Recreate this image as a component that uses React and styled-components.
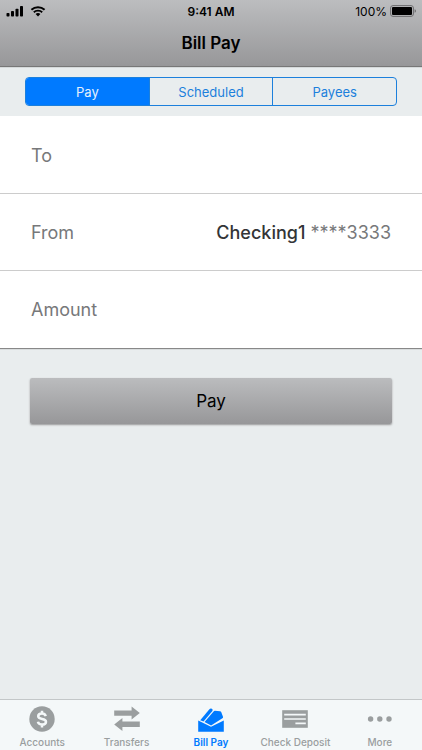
import { useState } from "react";
import styled, { createGlobalStyle } from "styled-components";


const SignalIcon = () => (
    <svg width="18" height="12" viewBox="0 0 18 12" aria-hidden="true">
        <rect x="0.5" y="8" width="3" height="3.5" rx="0.8" />
        <rect x="5" y="6" width="3" height="5.5" rx="0.8" />
        <rect x="9.5" y="3.7" width="3" height="7.8" rx="0.8" />
        <rect x="14" y="1" width="3" height="10.5" rx="0.8" />
    </svg>
)

const WifiIcon = () => (
    <svg width="16" height="12" viewBox="0 0 16 12" aria-hidden="true">
        <path d="M1.4 4.7C5.1 1.3 10.9 1.3 14.6 4.7" fill="none" stroke="#000" strokeWidth="2" />
        <path d="M3.8 7.2C6.1 5.1 9.9 5.1 12.2 7.2" fill="none" stroke="#000" strokeWidth="1.9" />
        <path d="M5.6 9C7 7.8 9 7.8 10.4 9L8 11.4Z" />
    </svg>
)

const BatteryIcon = () => (
    <svg width="26" height="12" viewBox="0 0 26 12" aria-hidden="true">
        <rect x="0.6" y="0.6" width="22.8" height="10.8" rx="2.4" fill="none" stroke="#6c6c6e" strokeWidth="1" />
        <rect x="2" y="2" width="20" height="8" rx="1" />
        <path d="M24.6 4.2C26.4 4.6 26.4 7.4 24.6 7.8Z" fill="#6c6c6e" />
    </svg>
)

const AccountsIcon = () => (
    <svg width="28" height="28" viewBox="0 0 28 28" aria-hidden="true">
        <circle cx="14" cy="14" r="12.7" fill="currentColor" />
        <path
            d="M17.8 11.1C17.2 9.3 15.9 8.5 14 8.5C11.8 8.5 10.2 9.6 10.2 11.3C10.2 15.1 18 12.8 18 16.7C18 18.5 16.4 19.6 14.1 19.6C11.9 19.6 10.4 18.7 9.9 16.8M14 5.8V8.5M14 19.6V22.4"
            fill="none"
            stroke="#f4f8f9"
            strokeWidth="2.5"
        />
    </svg>
)

const TransfersIcon = () => (
    <svg width="28" height="28" viewBox="0 0 28 28" fill="currentColor" aria-hidden="true">
        <path d="M1.2 5.5H18.6V1.6L26.8 8.1L18.6 14.6V10.8H1.2Z" />
        <path d="M26.8 16.6H9.4V12.9L1.2 19.4L9.4 25.9V21.9H26.8Z" />
    </svg>
)

const BillPayIcon = () => (
    <svg width="28" height="28" viewBox="0 0 28 28" fill="currentColor" aria-hidden="true">
        <path d="M1.2 15.4L14 21.8L26.8 15.4V26.8H1.2Z" />
        <path d="M3.2 15.2L12.2 4.4Q13.4 3.2 14.9 3.8Q16.2 4.6 15.4 5.9L6.5 16.6Z" />
        <path d="M7.5 16.9L16.6 6.4Q17.1 5.8 17.9 5.8L23 6.2Q23.9 6.3 24.2 7.1L26 11.7Q26.3 12.7 25.4 13.2L14.1 20.4Z" />
    </svg>
)

const CheckIcon = () => (
    <svg width="28" height="28" viewBox="0 0 28 28" aria-hidden="true">
        <rect x="1.2" y="5.2" width="25.6" height="17.6" fill="currentColor" />
        <path d="M3.2 9.7H24.8M3.2 14H24.8M14.4 18.3H24.8" stroke="#f4f8f9" strokeWidth="1.7" />
    </svg>
)

const MoreIcon = () => (
    <svg width="28" height="28" viewBox="0 0 28 28" fill="currentColor" aria-hidden="true">
        <circle cx="4.6" cy="14" r="2.7" />
        <circle cx="13.8" cy="14" r="2.7" />
        <circle cx="23" cy="14" r="2.7" />
    </svg>
)

const sections = ["Pay", "Scheduled", "Payees"];

const tabs = [
    { label: "Accounts", href: "#accounts", Icon: AccountsIcon },
    { label: "Transfers", href: "#transfers", Icon: TransfersIcon },
    { label: "Bill Pay", href: "#bill-pay", Icon: BillPayIcon },
    { label: "Check Deposit", href: "#check-deposit", Icon: CheckIcon },
    { label: "More", href: "#more", Icon: MoreIcon },
];


const App = () => {
    const [section, setSection] = useState("Pay");
    const [amount, setAmount] = useState("");

    return (
        <Page>
            <GlobalStyle />
            <Header>
                <StatusBar>
                    <StatusSide>
                        <SignalIcon />
                        <WifiIcon />
                    </StatusSide>
                    <Clock>9:41 AM</Clock>
                    <StatusSide $end>
                        <span>100%</span>
                        <BatteryIcon />
                    </StatusSide>
                </StatusBar>
                <Title>Bill Pay</Title>
            </Header>
            <Main>
                <Segments>
                    {sections.map((name) => (
                        <Segment
                            key={name}
                            type="button"
                            $active={name === section}
                            aria-pressed={name === section}
                            onClick={() => setSection(name)}
                        >
                            {name}
                        </Segment>
                    ))}
                </Segments>
                <Form onSubmit={(e) => e.preventDefault()}>
                    <Fields>
                        <PickerRow type="button">To</PickerRow>
                        <PickerRow type="button">
                            From
                            <Account><AccountName>Checking1</AccountName> ****3333</Account>
                        </PickerRow>
                        <AmountRow>
                            <label htmlFor="amount">Amount</label>
                            <AmountInput
                                id="amount"
                                inputMode="decimal"
                                value={amount}
                                onChange={(e) => setAmount(e.target.value)}
                            />
                        </AmountRow>
                    </Fields>
                    <PayButton type="submit">Pay</PayButton>
                </Form>
            </Main>
            <TabBar>
                {tabs.map(({ label, href, Icon }) => (
                    <Tab key={label} href={href} $active={label === "Bill Pay"}>
                        <Icon />
                        {label}
                    </Tab>
                ))}
            </TabBar>
        </Page>
    );
}

export default App;


const GlobalStyle = createGlobalStyle`
    * {
        box-sizing:border-box;
    }

    body {
        margin:0;
        background:#e9edee;
        font-family:Inter, "Liberation Sans", sans-serif;
    }

    button, input {
        font-family:inherit;
    }
`

const Page = styled.div`
    min-height:100vh;
    display:flex;
    flex-direction:column;
`

const Header = styled.header`
    padding-bottom:11px;
    background:linear-gradient(#bcbdbf, #979799);
    box-shadow:0 1px 1px #777;
`

const StatusBar = styled.div`
    height:22px;
    padding:0 6px;
    display:grid;
    grid-template-columns:1fr auto 1fr;
    align-items:center;
    font-size:12px;
`

const StatusSide = styled.div`
    display:flex;
    align-items:center;
    justify-content:${(props) => (props.$end ? "flex-end" : "flex-start")};
    gap:${(props) => (props.$end ? "3px" : "6px")};
`

const Clock = styled.span`
    font-weight:600;
`

const Title = styled.h1`
    margin:0;
    padding-top:9px;
    font-size:17px;
    line-height:24px;
    font-weight:600;
    text-align:center;
`

const Main = styled.main`
    flex:1;
`

const Segments = styled.div`
    margin:11px 25px 10px;
    display:flex;
    border:1px solid #1c80dc;
    border-radius:4px;
    overflow:hidden;
`

const Segment = styled.button`
    flex:1;
    height:27px;
    padding:0;
    border:0;
    background:${(props) => (props.$active ? "#007aff" : "transparent")};
    color:${(props) => (props.$active ? "#e6f1fc" : "#1c80dc")};
    font-size:13px;

    & + & {
        border-left:1px solid #1c80dc;
    }
`

const Form = styled.form`
    display:flex;
    flex-direction:column;
`

const Fields = styled.div`
    padding-top:1px;
    background:#fff;
    box-shadow:0 1px 1px #888;
`

const PickerRow = styled.button`
    width:100%;
    height:77px;
    padding:0 31px;
    display:flex;
    align-items:center;
    justify-content:space-between;
    border:0;
    border-bottom:1px solid #ccc;
    background:transparent;
    color:#77787a;
    font-size:18px;
    text-align:left;
`

const AmountRow = styled.div`
    height:77px;
    padding:0 31px;
    display:flex;
    align-items:center;
    gap:16px;
    color:#77787a;
    font-size:18px;
`

const AmountInput = styled.input`
    flex:1;
    min-width:0;
    padding:0;
    border:0;
    outline:0;
    background:transparent;
    color:#333537;
    font-size:18px;
    text-align:right;
`

const Account = styled.span`
    white-space:nowrap;
`

const AccountName = styled.span`
    color:#333537;
    font-weight:500;
`

const PayButton = styled.button`
    height:46px;
    margin:30px 30px;
    border:0;
    border-radius:2px;
    background:linear-gradient(#bbbcbe, #979799);
    box-shadow:0 1px 2px #999;
    color:#000;
    font-size:17px;
`

const TabBar = styled.nav`
    display:flex;
    border-top:1px solid #c3c7c8;
    background:#f4f8f9;
`

const Tab = styled.a`
    flex:1;
    height:50px;
    padding-top:5px;
    display:flex;
    flex-direction:column;
    align-items:center;
    gap:2px;
    color:${(props) => (props.$active ? "#007aff" : "#9a9e9f")};
    font-size:10px;
    line-height:14px;
    font-weight:${(props) => (props.$active ? 600 : 500)};
    text-decoration:none;
    white-space:nowrap;
`
